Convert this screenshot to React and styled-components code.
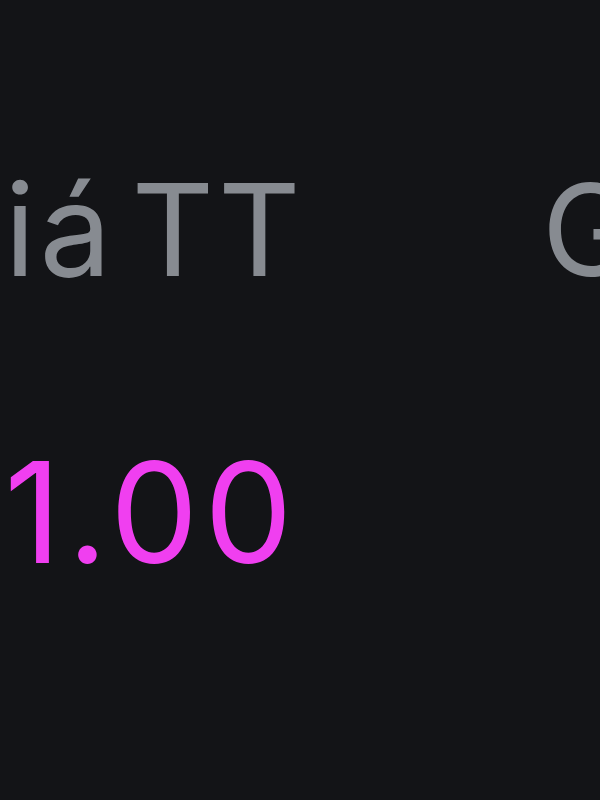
import React from "react";
import styled, { createGlobalStyle } from "styled-components";

const Global = createGlobalStyle`
  html, body { margin: 0; padding: 0; background: #131417; }
  body { width: 600px; height: 800px; overflow: hidden; }
`;

const Screen = styled.div`
  width: 600px;
  height: 800px;
  background: #131417;
  overflow: hidden;
  font-family: Inter, "Liberation Sans", sans-serif;
  padding-top: 166px;
  box-sizing: border-box;
`;

const Row = styled.div`
  display: flex;
  align-items: flex-start;
  gap: 237px;
  margin-left: ${(p) => p.$offset}px;
`;

const Column = styled.div`
  display: flex;
  flex-direction: column;
  align-items: flex-end;
  gap: 148px;
  flex-shrink: 0;
`;

const Label = styled.div`
  font-size: 128px;
  line-height: 1;
  letter-spacing: 4px;
  word-spacing: -24px;
  color: #878b91;
  white-space: nowrap;
`;

const Value = styled.div`
  font-size: 140px;
  line-height: 1;
  letter-spacing: 6px;
  color: #f03ff0;
  white-space: nowrap;
  margin-right: 6px;
`;

export default function App() {
  return (
    <>
      <Global />
      <Screen>
        <Row $offset={-95}>
          <Column>
            <Label>Giá TT</Label>
            <Value>1.00</Value>
          </Column>
          <Column>
            <Label>Giá vốn</Label>
            <Value>1.00</Value>
          </Column>
        </Row>
      </Screen>
    </>
  );
}
